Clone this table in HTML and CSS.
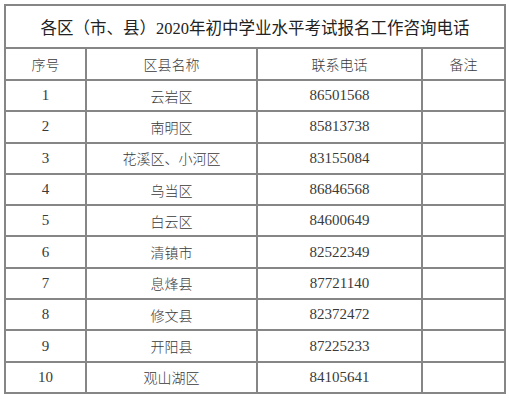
FILE: index.html
```html
<!DOCTYPE html>
<html lang="zh-CN">
<head>
<meta charset="utf-8">
<link rel="stylesheet" href="styles.css">
</head>
<body>
<table class="tbl">
  <colgroup>
    <col class="c1"><col class="c2"><col class="c3"><col class="c4">
  </colgroup>
  <tr class="title-row"><td colspan="4" class="title">各区（市、县）2020年初中学业水平考试报名工作咨询电话</td></tr>
  <tr class="head-row"><td>序号</td><td>区县名称</td><td>联系电话</td><td>备注</td></tr>
  <tr><td class="num">1</td><td>云岩区</td><td class="num">86501568</td><td></td></tr>
  <tr><td class="num">2</td><td>南明区</td><td class="num">85813738</td><td></td></tr>
  <tr><td class="num">3</td><td>花溪区、小河区</td><td class="num">83155084</td><td></td></tr>
  <tr><td class="num">4</td><td>乌当区</td><td class="num">86846568</td><td></td></tr>
  <tr><td class="num">5</td><td>白云区</td><td class="num">84600649</td><td></td></tr>
  <tr><td class="num">6</td><td>清镇市</td><td class="num">82522349</td><td></td></tr>
  <tr><td class="num">7</td><td>息烽县</td><td class="num">87721140</td><td></td></tr>
  <tr><td class="num">8</td><td>修文县</td><td class="num">82372472</td><td></td></tr>
  <tr><td class="num">9</td><td>开阳县</td><td class="num">87225233</td><td></td></tr>
  <tr><td class="num">10</td><td>观山湖区</td><td class="num">84105641</td><td></td></tr>
</table>
</body>
</html>
```

FILE: styles.css
```css
html, body {
  margin: 0;
  padding: 0;
  background: #ffffff;
}
body {
  padding: 4px 0 0 4px;
  font-family: "Liberation Serif", "Noto Sans CJK SC", serif;
  color: #3a3a3a;
}
.tbl {
  border-collapse: collapse;
  table-layout: fixed;
  width: 500px;
}
.c1 { width: 81px; }
.c2 { width: 171px; }
.c3 { width: 165px; }
.c4 { width: 83px; }
.tbl td {
  border: 2px solid #868686;
  text-align: center;
  vertical-align: middle;
  padding: 0;
  height: 29.3px;
  font-size: 14px;
  font-weight: 300;
}
.tbl td.num {
  font-size: 15px;
}
.title-row td.title {
  height: 41px;
  font-size: 16.5px;
  font-weight: 400;
  color: #222222;
}
.head-row td {
  height: 30px;
}
```
